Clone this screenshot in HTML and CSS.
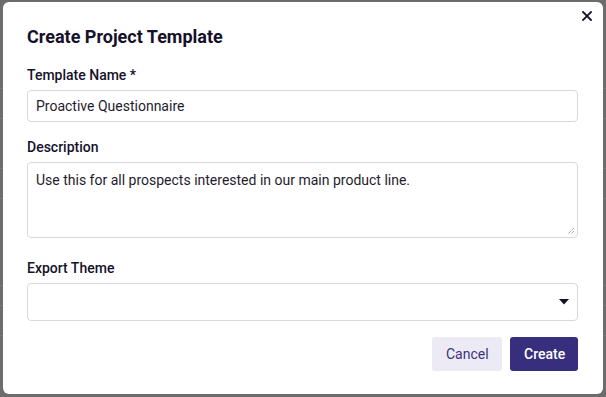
FILE: index.html
```html
<!DOCTYPE html>
<html>
<head>
<meta charset="utf-8">
<link rel="stylesheet" href="styles.css">
</head>
<body>
<div class="backdrop">
  <div class="bg-lines">
    <div class="bg-line"></div><div class="bg-line"></div><div class="bg-line"></div><div class="bg-line"></div><div class="bg-line"></div><div class="bg-line"></div><div class="bg-line"></div>
  </div>
  <div class="modal">
    <button class="close" aria-label="Close">
      <svg width="10" height="10" viewBox="0 0 10 10"><path d="M1 1L9 9M9 1L1 9" stroke="#15112b" stroke-width="1.8" stroke-linecap="square"/></svg>
    </button>
    <h2 class="title">Create Project Template</h2>
    <div class="field">
      <label class="label">Template Name *</label>
      <div class="input">Proactive Questionnaire</div>
    </div>
    <div class="field field-desc">
      <label class="label">Description</label>
      <div class="textarea">Use this for all prospects interested in our main product line.
        <svg class="grip" width="8" height="8" viewBox="0 0 8 8"><path d="M7 1L1 7M7 4L4 7" stroke="#777" stroke-width="1" stroke-dasharray="1 1"/></svg>
      </div>
    </div>
    <div class="field">
      <label class="label">Export Theme</label>
      <div class="select">
        <svg class="caret" width="10" height="6" viewBox="0 0 10 6"><path d="M0 0H10L5 5.5Z" fill="#15112b"/></svg>
      </div>
    </div>
    <div class="actions">
      <button class="btn btn-cancel">Cancel</button>
      <button class="btn btn-create">Create</button>
    </div>
  </div>
</div>
</body>
</html>
```
FILE: styles.css
```css
html, body {
  margin: 0;
  padding: 0;
  height: 100%;
}
body {
  background: #6c6c6c;
  font-family: Roboto, "Liberation Sans", sans-serif;
  overflow: hidden;
}
.backdrop {
  position: relative;
  height: 397px;
  padding: 2px 0 0 3px;
  box-sizing: border-box;
}
.bg-lines {
  position: absolute;
  inset: 0;
}
.bg-line {
  position: absolute;
  left: 0;
  right: 0;
  height: 1px;
  background: #7a7a7a;
}
.bg-line:nth-child(1) { top: 88px; }
.bg-line:nth-child(2) { top: 118px; }
.bg-line:nth-child(3) { top: 168px; }
.bg-line:nth-child(4) { top: 198px; }
.bg-line:nth-child(5) { top: 285px; }
.bg-line:nth-child(6) { top: 305px; }
.bg-line:nth-child(7) { top: 335px; }
.modal {
  position: relative;
  width: 600px;
  height: 392px;
  box-sizing: border-box;
  background: #fff;
  border-radius: 6px;
  padding: 24px 25px 0 24px;
}
.close {
  position: absolute;
  top: 9px;
  right: 11px;
  border: 0;
  background: none;
  padding: 0;
  width: 10px;
  height: 10px;
  display: flex;
}
.title {
  margin: 0 0 18px;
  font-size: 18px;
  font-weight: 700;
  color: #15112b;
  line-height: 22px;
}
.field {
  margin-bottom: 16px;
}
.field-desc {
  margin-bottom: 21px;
}
.label {
  display: block;
  font-size: 14px;
  font-weight: 500;
  color: #15112b;
  line-height: 18px;
  margin-bottom: 6px;
}
.input, .textarea, .select {
  border: 1px solid #d9d7e6;
  border-radius: 4px;
  box-sizing: border-box;
  font-size: 14px;
  color: #1f1c2e;
}
.input {
  height: 32px;
  line-height: 30px;
  padding: 0 8px;
}
.textarea {
  position: relative;
  height: 76px;
  padding: 8px 8px;
  line-height: 18px;
}
.grip {
  position: absolute;
  right: 2px;
  bottom: 2px;
}
.select {
  height: 38px;
  display: flex;
  align-items: center;
  justify-content: flex-end;
  padding-right: 8px;
}
.actions {
  display: flex;
  justify-content: flex-end;
  gap: 8px;
  margin-top: 1px;
}
.btn {
  height: 34px;
  border: 0;
  border-radius: 3px;
  font-family: Roboto, "Liberation Sans", sans-serif;
  font-size: 14px;
  padding: 0 14px;
}
.btn-cancel {
  background: #ecebf5;
  color: #3b3181;
  width: 70px;
}
.btn-create {
  background: #372f7e;
  color: #fff;
  font-weight: 500;
  width: 68px;
}
```
